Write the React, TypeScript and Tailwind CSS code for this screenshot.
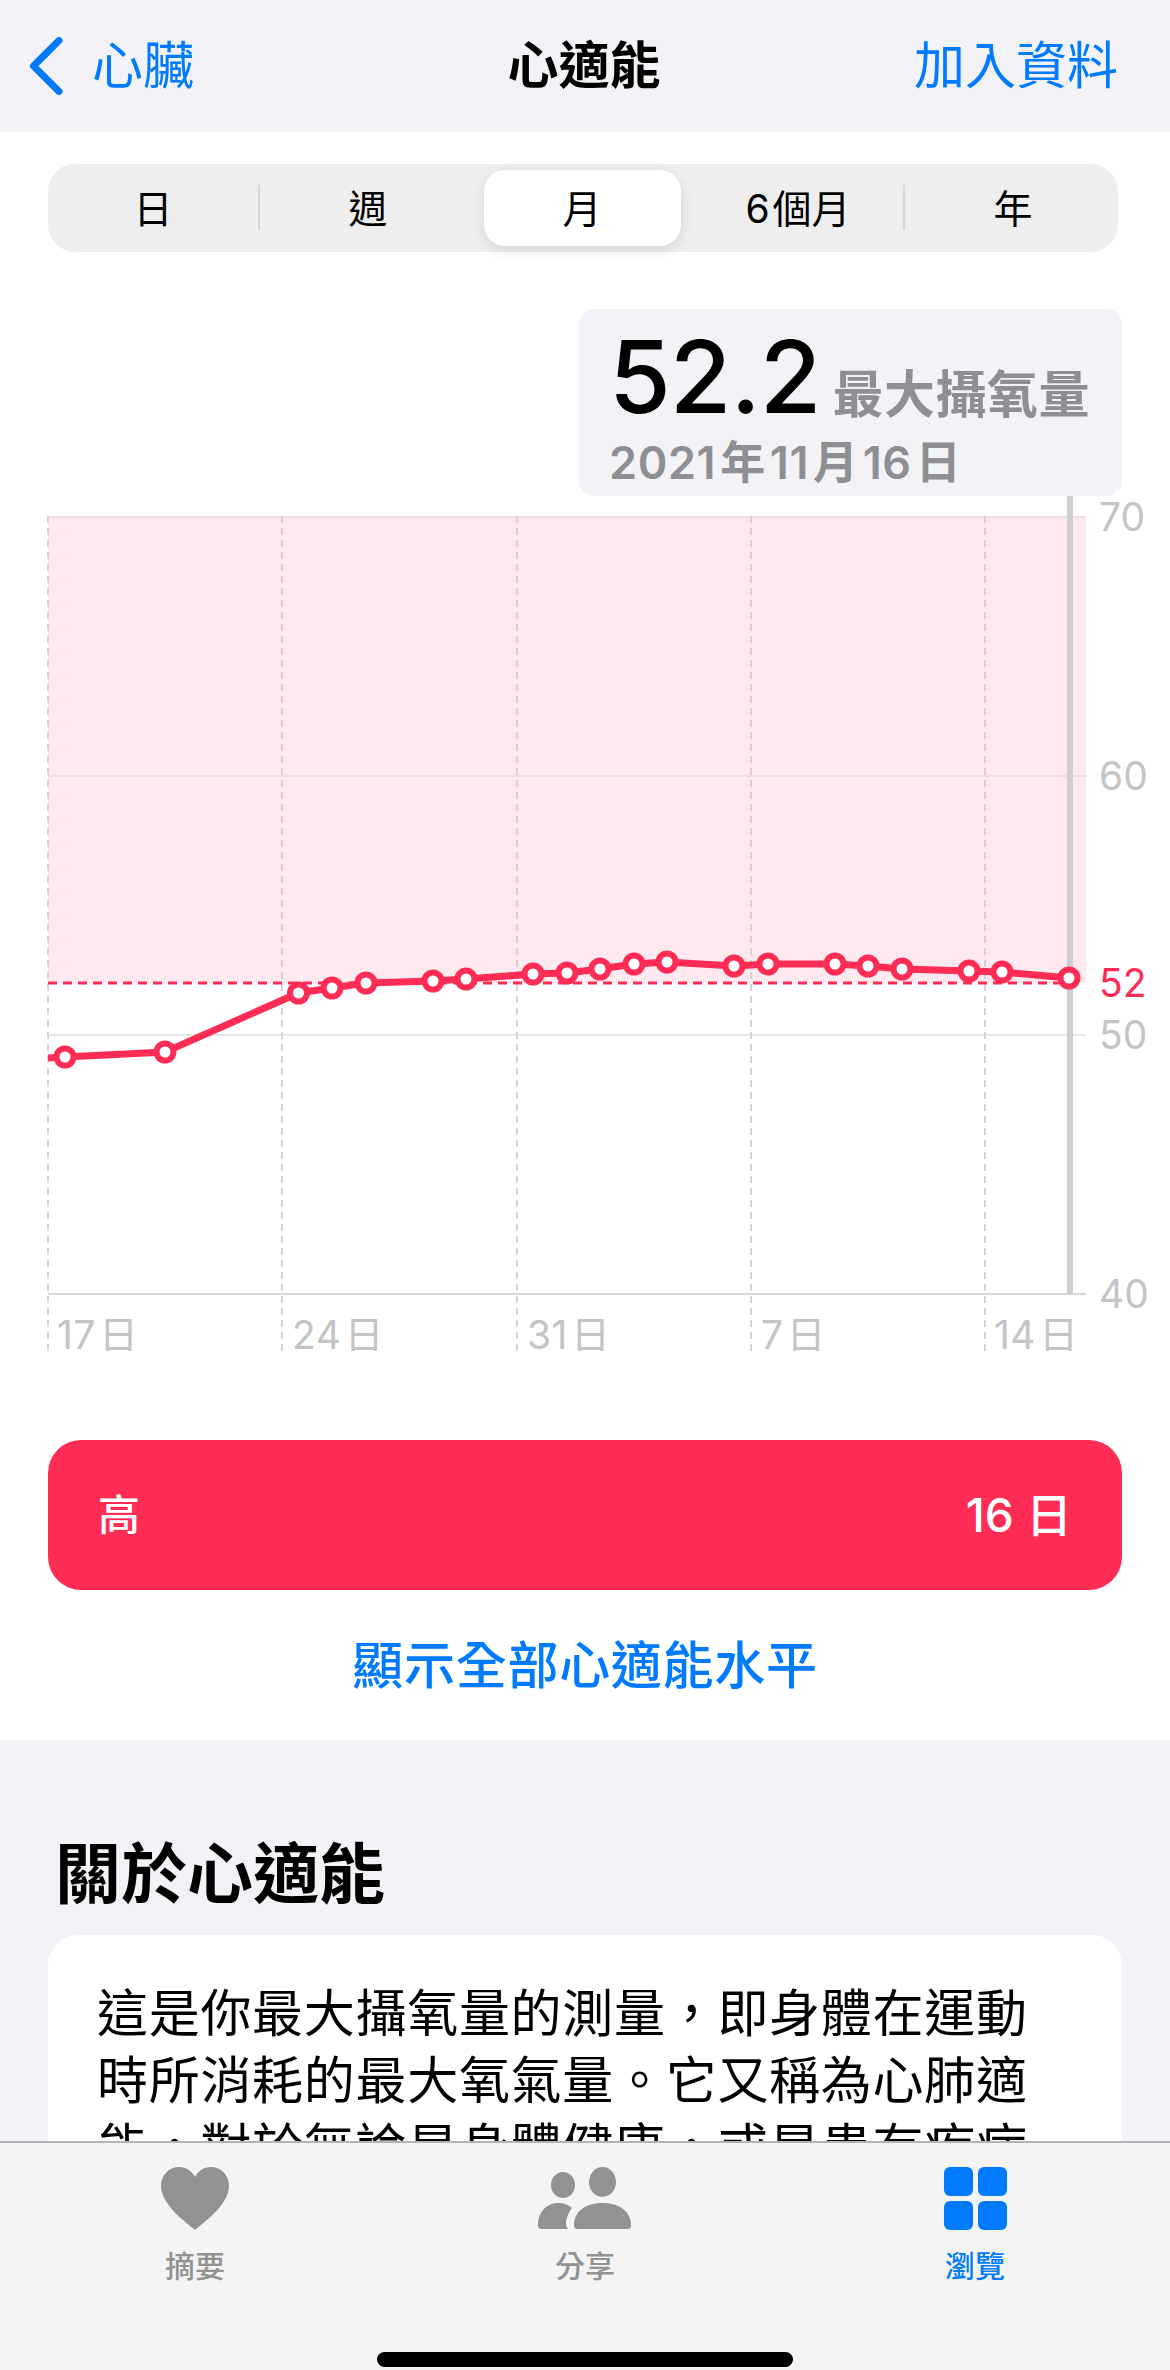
import React from "react";

const FONT = 'Inter, "Noto Sans CJK TC", sans-serif';
const pts: [number, number][] = [[65,1057],[165,1052],[298.5,993],[332,988],[366,983],[433,981],[466,979],[533,974],[567,973],[600,969],[634,964],[667,962],[734,966],[768,964],[835,964],[868,966],[902,969],[969,971],[1002,972],[1069,978]];
const Y0 = 496;

function Chart() {
  const p = pts.map(([x, y]) => `${x},${y - Y0}`).join(" ");
  const v = [48, 282, 517, 751, 985];
  const xl: [number, string][] = [[57,"17"],[292,"24"],[527,"31"],[761,"7"],[994,"14"]];
  const yl: [number, string][] = [[517,"70"],[776,"60"],[1035,"50"],[1294,"40"]];
  return (
    <svg width="1170" height="864" viewBox="0 0 1170 864" className="block">
      <rect x="48" y={516-Y0} width="1038" height={983-516} fill="#fee9ee" />
      <line x1="48" x2="1086" y1={517-Y0} y2={517-Y0} stroke="#f3dce2" strokeWidth="2" />
      <line x1="48" x2="1086" y1={776-Y0} y2={776-Y0} stroke="#f0dbe0" strokeWidth="2" />
      <line x1="48" x2="1086" y1={1035-Y0} y2={1035-Y0} stroke="#e8e8ea" strokeWidth="2" />
      <line x1="48" x2="1086" y1={1294-Y0} y2={1294-Y0} stroke="#d8d8da" strokeWidth="2" />
      {v.map((x) => (
        <line key={x} x1={x} x2={x} y1={516-Y0} y2={1351-Y0} stroke="#d2ced2" strokeWidth="1.8" strokeDasharray="7 5" />
      ))}
      <rect x="1067" y="0" width="6" height={1294-Y0} fill="#cfced3" />
      <line x1="48" x2="1070" y1={983-Y0} y2={983-Y0} stroke="#ff2d55" strokeWidth="3" strokeDasharray="9 6" />
      <polyline points={`48,${1058-Y0} ${p}`} fill="none" stroke="#ff2d55" strokeWidth="7" />
      {pts.map(([x, y]) => (
        <circle key={x} cx={x} cy={y-Y0} r="8.5" fill="#fff" stroke="#ff2d55" strokeWidth="6" />
      ))}
      <g fontFamily={FONT} fontSize="39" fill="#c4c4c6">
        {yl.map(([y, t]) => (
          <text key={t} x="1099" y={y-Y0+14}>{t}</text>
        ))}
        <text x="1099" y={983-Y0+14} fill="#ff2d55">52</text>
      </g>
      <g fontFamily={FONT} fontSize="39" fill="#c4c4c6">
        {xl.map(([x, t]) => (
          <text key={t} x={x} y={1349-Y0} letterSpacing="0.5">{t}<tspan dx="3">日</tspan></text>
        ))}
      </g>
      <rect x="0" y={1351-Y0} width="1170" height="20" fill="#fff" />
    </svg>
  );
}

function Segments() {
  const divider = "relative after:content-[''] after:absolute after:right-[1px] after:top-[15px] after:h-[45px] after:w-[2px] after:bg-[#d6d6d8]";
  return (
    <div className="mt-[32px] ml-[48px] mr-[52px] h-[88px] rounded-[27px] bg-[#eeeeef] grid grid-cols-[repeat(5,215px)] justify-center py-[6px] text-[39px] leading-none">
      <div className={"flex items-center justify-center " + divider}>日</div>
      <div className="flex items-center justify-center">週</div>
      <div className="flex items-center justify-center">
        <div className="w-[197px] h-full mr-[2px] flex items-center justify-center bg-white rounded-[21px] shadow-[0_4px_14px_rgba(0,0,0,0.1)]">月</div>
      </div>
      <div className={"flex items-center justify-center " + divider}>6<span className="ml-[3px]">個月</span></div>
      <div className="flex items-center justify-center">年</div>
    </div>
  );
}

export default function App() {
  return (
    <div className="relative w-[1170px] h-[2370px] overflow-hidden bg-[#f2f2f7] text-black" style={{ fontFamily: FONT }}>
      <header className="h-[132px] bg-[#f2f2f7] flex items-center justify-between pl-[28px] pr-[52px] pb-[1px]">
        <div className="w-[400px] flex items-center gap-[28px] text-[#007aff] text-[51px] leading-none">
          <svg width="36" height="58" viewBox="0 0 36 58" fill="none"><path d="M31 3.5 5.5 29 31 54.5" stroke="#007aff" strokeWidth="7" strokeLinecap="round" strokeLinejoin="round" /></svg>
          <span>心臟</span>
        </div>
        <div className="text-[51px] font-semibold leading-none mr-[-22px]">心適能</div>
        <div className="w-[400px] text-right text-[#007aff] text-[51px] leading-none">加入資料</div>
      </header>
      <main className="bg-white h-[1608px] flex flex-col">
        <Segments />
        <div className="mt-[57px] self-end mr-[48px] w-[543px] h-[187px] rounded-[15px] bg-[#f2f2f7] pl-[30px] pt-[13px]">
          <div className="flex items-baseline h-[110px]">
            <span className="text-[100px] leading-[110px] font-medium tracking-[-1px]">52.2</span>
            <span className="ml-[12px] text-[51px] tracking-[0.5px] font-semibold text-[#8e8e93] leading-none">最大攝氧量</span>
          </div>
          <div className="text-[45px] leading-[62px] font-semibold text-[#8e8e93] tracking-[0.6px]">
            2021<span className="mx-[4px]">年</span>11<span className="mx-[4px]">月</span>16<span className="ml-[4px]">日</span>
          </div>
        </div>
        <Chart />
        <div className="mt-[80px] mx-[48px] h-[150px] shrink-0 rounded-[33px] bg-[#ff2d55] text-white flex items-center justify-between pl-[50px] pr-[50px] leading-none">
          <span className="text-[42px] font-medium">高</span>
          <span className="text-[46px] font-medium">16 日</span>
        </div>
        <div className="h-[150px] shrink-0 flex items-center justify-center text-[#007aff] text-[51px] font-medium tracking-[0.7px] leading-none">顯示全部心適能水平</div>
      </main>
      <section className="px-[48px]">
        <h2 className="mt-[94px] ml-[7px] text-[66px] leading-[80px] font-bold">關於心適能</h2>
        <div className="mt-[21px] bg-white rounded-[30px] pl-[49px] pr-[80px] pt-[45px] h-[400px] text-[51px] leading-[67px] tracking-[0.7px]">
          這是你最大攝氧量的測量，即身體在運動時所消耗的最大氧氣量。它又稱為心肺適能，對於無論是身體健康，或是患有疾病
        </div>
      </section>
      <nav className="absolute left-0 right-0 bottom-0 h-[229px] bg-[#f4f4f5] border-t-2 border-[#b3b3b5] grid grid-cols-3">
        <div className="flex flex-col items-center pt-[24px] text-[#929292]">
          <svg width="68" height="63" viewBox="0 0 68 63"><path d="M34 63C30 59 0 39 0 19 0 8 8 0 18 0c7 0 13 4 16 10C37 4 43 0 50 0c10 0 18 8 18 19 0 20-30 40-34 44Z" fill="#929292" /></svg>
          <span className="mt-[20px] text-[30px] leading-[32px] font-medium">摘要</span>
        </div>
        <div className="flex flex-col items-center pt-[24px] text-[#929292]">
          <svg width="94" height="63" viewBox="0 0 94 63" fill="#929292">
            <ellipse cx="25" cy="18" rx="12" ry="13" />
            <ellipse cx="64.5" cy="15" rx="13.5" ry="15" />
            <path d="M30 62H4c-3 0-4-1-4-4 0-12 8-22 20-22 6 0 11 2 14 5-3 4-6 10-6 16 0 2 1 4 2 5Z" />
            <path d="M40 62c-3 0-4-1-4-4 0-13 11-22 28.5-22S93 45 93 58c0 3-1 4-4 4H40Z" />
          </svg>
          <span className="mt-[20px] text-[30px] leading-[32px] font-medium">分享</span>
        </div>
        <div className="flex flex-col items-center pt-[24px] text-[#007aff]">
          <div className="grid grid-cols-2 gap-[5px] w-[63px] h-[63px]">
            <div className="bg-[#007aff] rounded-[6px]" />
            <div className="bg-[#007aff] rounded-[6px]" />
            <div className="bg-[#007aff] rounded-[6px]" />
            <div className="bg-[#007aff] rounded-[6px]" />
          </div>
          <span className="mt-[20px] text-[30px] leading-[32px] font-medium">瀏覽</span>
        </div>
        <div className="absolute left-[377px] bottom-[3px] w-[416px] h-[15px] rounded-full bg-black" />
      </nav>
    </div>
  );
}
